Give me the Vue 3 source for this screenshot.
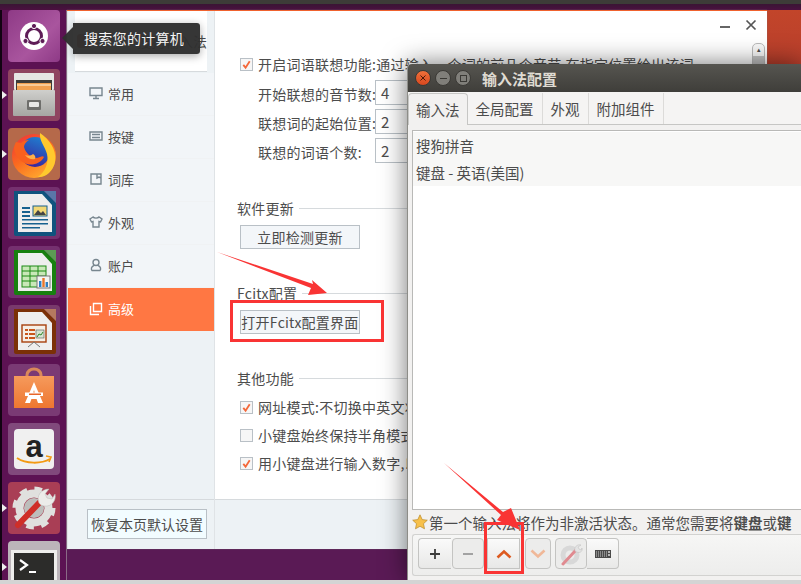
<template>
  <div class="desktop">
    <div class="topbar" />

    <!-- launcher -->
    <aside class="launcher">
      <div v-for="item in launcher" :key="item.name" class="tile" :class="'tile-' + item.name">
        <span v-if="item.running" class="pip" />
        <svg v-if="item.name === 'dash'" viewBox="0 0 52 52" width="52" height="52">
          <circle cx="26" cy="26" r="14" fill="#fff" />
          <circle cx="26" cy="26" r="7.5" fill="none" stroke="#5e1c57" stroke-width="3" />
          <circle cx="26" cy="16" r="2.6" fill="#5e1c57" stroke="#fff" />
          <circle cx="17.5" cy="31" r="2.6" fill="#5e1c57" stroke="#fff" />
          <circle cx="34.5" cy="31" r="2.6" fill="#5e1c57" stroke="#fff" />
        </svg>
        <svg v-else-if="item.name === 'files'" viewBox="0 0 52 52" width="52" height="52">
          <defs>
            <linearGradient id="drawer" x1="0" y1="0" x2="0" y2="1">
              <stop offset="0" stop-color="#cfcfcc" />
              <stop offset="1" stop-color="#a6a6a3" />
            </linearGradient>
          </defs>
          <rect x="6" y="4" width="40" height="17" rx="1" fill="#e6e6e4" />
          <rect x="8" y="11" width="36" height="10" fill="#3d3b38" />
          <rect x="9" y="14" width="34" height="7" fill="#f0a050" />
          <rect x="9" y="15.5" width="34" height="1" fill="#fff3dc" />
          <rect x="5" y="21" width="42" height="26" rx="1" fill="url(#drawer)" />
          <rect x="19" y="31" width="14" height="10" rx="1" fill="#6e6e6b" />
          <rect x="21" y="33" width="10" height="5" rx="1" fill="#e8e8e6" />
        </svg>
        <svg v-else-if="item.name === 'firefox'" viewBox="0 0 52 52" width="52" height="52">
          <defs>
            <linearGradient id="foxbody" x1="0" y1="0" x2=".6" y2="1">
              <stop offset="0" stop-color="#ee2f3c" />
              <stop offset=".55" stop-color="#fb6a1f" />
              <stop offset="1" stop-color="#ffa62e" />
            </linearGradient>
            <linearGradient id="foxglobe" x1=".7" y1="0" x2=".3" y2="1">
              <stop offset="0" stop-color="#1f7fd0" />
              <stop offset="1" stop-color="#3a1f9c" />
            </linearGradient>
          </defs>
          <circle cx="26" cy="28" r="22" fill="url(#foxbody)" />
          <circle cx="27" cy="24" r="15" fill="url(#foxglobe)" />
          <path d="M32 5c9 6 17 16 15 29-2 10-10 16-17 15 7-5 11-14 9-23-2-8-8-13-7-21z" fill="#ffc92e" />
          <path d="M8 14l5 1c2-2 5-3 8-3-3 2-5 4-5 7 1 4 3 6 5 8 2 3 7 4 11 2 2-1 3-1 4 0-3 6-11 9-17 7-7-2-12-9-13-15 0-3 1-5 2-7z" fill="#f8601f" />
          <path d="M17 27c3 1 6 1 8-1 2 1 3 3 2 5-3 1-7 0-10-4z" fill="#ffb04a" />
        </svg>
        <svg v-else-if="item.name === 'writer'" viewBox="0 0 52 52" width="52" height="52">
          <path d="M6 4h30l12 12v31a2 2 0 0 1-2 2H8a2 2 0 0 1-2-2z" fill="#10537e" />
          <path d="M10 7h24l10 11v27H10z" fill="#eeeeee" />
          <path d="M36 4l12 12V4z" fill="#4f95c2" opacity=".7" />
          <path d="M14 20h8v2h-8zM14 24h8v2h-8zM14 28h8v2h-8zM14 32h26v1.6H14zM14 36h26v1.6H14zM14 40h18v1.6H14z" fill="#16618f" />
          <rect x="25" y="19" width="14" height="10" fill="#f2d875" stroke="#16618f" />
          <path d="M26 28l4-5 3 3 2-2 3 4z" fill="#444" />
        </svg>
        <svg v-else-if="item.name === 'calc'" viewBox="0 0 52 52" width="52" height="52">
          <path d="M6 4h30l12 12v31a2 2 0 0 1-2 2H8a2 2 0 0 1-2-2z" fill="#17800f" />
          <path d="M10 7h24l10 11v27H10z" fill="#eeeeee" />
          <path d="M36 4l12 12V4z" fill="#56b84d" opacity=".8" />
          <rect x="14" y="20" width="24" height="21" fill="#c9e8b8" stroke="#1c8a14" />
          <path d="M14 25h24M14 30h24M14 35h24M22 20v21M30 20v21" stroke="#1c8a14" />
          <rect x="29" y="30" width="13" height="12" fill="#f4f4f4" stroke="#777" />
          <path d="M31 35h2.4v6H31z" fill="#2b7fc4" /><path d="M34.3 32h2.4v9h-2.4z" fill="#e8762a" /><path d="M37.6 36H40v5h-2.4z" fill="#2b7fc4" />
        </svg>
        <svg v-else-if="item.name === 'impress'" viewBox="0 0 52 52" width="52" height="52">
          <path d="M6 4h30l12 12v31a2 2 0 0 1-2 2H8a2 2 0 0 1-2-2z" fill="#7b3007" />
          <path d="M10 7h24l10 11v27H10z" fill="#eeeeee" />
          <path d="M36 4l12 12V4z" fill="#c48a5c" opacity=".8" />
          <rect x="14" y="20" width="24" height="17" fill="#f6efe6" stroke="#a8400e" stroke-width="1.4" />
          <path d="M17 24h3v2h-3zM17 28h3v2h-3zM17 32h3v2h-3zM21 24h6v2h-6zM21 28h6v2h-6zM21 32h6v2h-6z" fill="#c8561c" />
          <rect x="28" y="25" width="8" height="8" fill="#d6e4d2" stroke="#555" stroke-width=".6" />
          <path d="M29 32l2-3 2 1 2-3" stroke="#2f8a2a" fill="none" />
          <path d="M26 37l-6 5M26 37l6 5" stroke="#777" />
        </svg>
        <svg v-else-if="item.name === 'store'" viewBox="0 0 52 52" width="52" height="52">
          <defs>
            <linearGradient id="bag" x1="0" y1="0" x2="0" y2="1">
              <stop offset="0" stop-color="#f59a5c" />
              <stop offset="1" stop-color="#ee7630" />
            </linearGradient>
          </defs>
          <path d="M19 16v-5a7 6 0 0 1 14 0v5" fill="none" stroke="#d9885a" stroke-width="3" />
          <path d="M6 12h40v32H6z" fill="url(#bag)" />
          <path d="M26 18l-9 21h5l1.4-4h5.2l1.4 4h5zm0 8l1.2 4h-2.4z" fill="#fff" />
          <rect x="17" y="28.5" width="18" height="3.5" fill="#fff" />
          <rect x="21" y="29.5" width="12" height="1.5" fill="#e8662a" />
        </svg>
        <svg v-else-if="item.name === 'amazon'" viewBox="0 0 52 52" width="52" height="52">
          <rect x="6" y="6" width="40" height="40" rx="4" fill="#f0f0f0" />
          <text x="26" y="34" text-anchor="middle" class="amazon-a">a</text>
          <path d="M9 35c9 6 24 6 33 1" fill="none" stroke="#f39a12" stroke-width="2" />
          <path d="M38 33l5 1-2 5" fill="none" stroke="#f39a12" stroke-width="1.6" />
        </svg>
        <svg v-else-if="item.name === 'settings'" viewBox="0 0 52 52" width="52" height="52">
          <circle cx="26" cy="26" r="10" fill="#bdbdbb" />
          <circle cx="26" cy="26" r="14.5" fill="none" stroke="#e0e0de" stroke-width="8" />
          <circle cx="26" cy="26" r="19" fill="none" stroke="#e0e0de" stroke-width="5" stroke-dasharray="7.5 7.4" />
          <path d="M10 43L33 19" stroke="#cf2f28" stroke-width="6" stroke-linecap="round" />
          <path d="M31 21c-3-7 2-14 10-14l-4 5 2 4 5 1 3-5c2 8-6 15-14 11z" fill="#ececea" stroke="#b8b8b6" stroke-width=".5" />
        </svg>
        <svg v-else-if="item.name === 'terminal'" viewBox="0 0 52 52" width="52" height="52">
          <rect x="3" y="9" width="46" height="43" fill="#eeeeec" />
          <rect x="6" y="12" width="40" height="40" fill="#2c2c2a" />
          <path d="M12 19l7 5-7 5" fill="none" stroke="#fff" stroke-width="2.2" />
          <path d="M21 31h7" stroke="#fff" stroke-width="2" />
        </svg>
      </div>
    </aside>

    <div class="wallpaper-right" />
    <div class="bottom-strip" />

    <!-- sogou settings window -->
    <section class="settings">
      <div class="side">
        <div class="side-head">
          <span class="side-logo" />
          <span class="side-title">搜狗输入法</span>
        </div>
        <nav class="side-menu">
          <a v-for="m in menu" :key="m.label" class="side-item" :class="{ active: m.active }">
            <svg viewBox="0 0 14 14" width="14" height="14" fill="none" stroke="currentColor" stroke-width="1.4">
              <path :d="m.icon" />
            </svg>
            {{ m.label }}
          </a>
        </nav>
        <div class="side-foot">
          <button class="btn reset">恢复本页默认设置</button>
        </div>
      </div>

      <div class="main">
        <div class="win-controls">
          <span class="win-min" />
          <svg viewBox="0 0 12 12" width="12" height="12"><path d="M1.5 1.5l9 9M10.5 1.5l-9 9" stroke="#555" stroke-width="1.7" /></svg>
        </div>
        <div class="scroll-thumb"><span>▴</span></div>

        <label class="check-row first">
          <span class="check on"><svg viewBox="0 0 12 12" width="11" height="11"><path d="M2.5 6.5l2.5 3 4.5-7" fill="none" stroke="#f4683a" stroke-width="2" /></svg></span>
          开启词语联想功能:通过输入一个词的前几个音节,在指定位置给出该词
        </label>
        <div class="field-row"><span class="field-label">开始联想的音节数:</span><span class="field">4</span></div>
        <div class="field-row"><span class="field-label">联想词的起始位置:</span><span class="field">2</span></div>
        <div class="field-row"><span class="field-label">联想的词语个数:</span><span class="field">2</span></div>

        <h4 class="group update"><span>软件更新</span></h4>
        <button class="btn wide">立即检测更新</button>

        <h4 class="group fcitx"><span>Fcitx配置</span></h4>
        <button class="btn wide open-fcitx">打开Fcitx配置界面</button>

        <h4 class="group other"><span>其他功能</span></h4>
        <label v-for="c in others" :key="c.text" class="check-row">
          <span class="check" :class="{ on: c.on }">
            <svg v-if="c.on" viewBox="0 0 12 12" width="11" height="11"><path d="M2.5 6.5l2.5 3 4.5-7" fill="none" stroke="#f4683a" stroke-width="2" /></svg>
          </span>
          {{ c.text }}
        </label>
      </div>
    </section>

    <!-- fcitx config dialog -->
    <section class="dialog">
      <header class="titlebar">
        <span class="dot close"><svg viewBox="0 0 8 8" width="8" height="8"><path d="M1.5 1.5l5 5M6.5 1.5l-5 5" stroke="#4a1a08" stroke-width="1" /></svg></span>
        <span class="dot"><i class="dash-mark" /></span>
        <span class="dot"><i class="box-mark" /></span>
        <span class="title">输入法配置</span>
      </header>
      <div class="tabs">
        <span v-for="(t, i) in tabs" :key="t" class="tab" :class="{ current: i === 0 }">{{ t }}</span>
      </div>
      <div class="list">
        <div class="list-item">搜狗拼音</div>
        <div class="list-item">键盘 - 英语(美国)</div>
      </div>
      <div class="hint">
        <svg viewBox="0 0 16 16" width="16" height="16"><path d="M8 .8l2.2 4.8 5.1.6-3.8 3.5 1 5.1L8 12.3l-4.5 2.5 1-5.1L.7 6.2l5.1-.6z" fill="#f7c04a" stroke="#b98a2a" stroke-width=".7" /></svg>
        <span>第一个输入法将作为非激活状态。通常您需要将<b>键盘</b>或<b>键</b></span>
      </div>
      <div class="toolbar">
        <button class="tool add"><svg viewBox="0 0 12 12" width="12" height="12"><path d="M6 1v10M1 6h10" stroke="#3c3c3c" stroke-width="1.8" /></svg></button>
        <button class="tool off remove"><svg viewBox="0 0 12 12" width="12" height="12"><path d="M1 6h10" stroke="#9a9a9a" stroke-width="1.8" /></svg></button>
        <button class="tool up"><svg viewBox="0 0 16 10" width="16" height="10"><path d="M1.5 8.5L8 2.5l6.5 6" fill="none" stroke="#dd5a20" stroke-width="2.6" /></svg></button>
        <button class="tool off down"><svg viewBox="0 0 16 10" width="16" height="10"><path d="M1.5 1.5L8 7.5l6.5-6" fill="none" stroke="#f0b898" stroke-width="2.6" /></svg></button>
        <button class="tool off config">
          <svg viewBox="0 0 24 24" width="24" height="24">
            <circle cx="11" cy="13" r="7" fill="none" stroke="#d8d8d8" stroke-width="5" />
            <path d="M4 22L17 8" stroke="#e08a90" stroke-width="3" stroke-linecap="round" />
            <path d="M16 9c-1-4 2-7 6-6l-3 2 1 2 2 1 1-2c1 4-3 6-7 3z" fill="#e4e4e4" stroke="#bbb" stroke-width=".5" />
          </svg>
        </button>
        <button class="tool kbd">
          <svg viewBox="0 0 16 8" width="16" height="8"><rect width="16" height="8" fill="#4a4a4a" /><path d="M1 2h11M1 4h11M1 6h11" stroke="#ccc" stroke-dasharray="1 1" /><path d="M13 2h2M13 5h2" stroke="#ddd" stroke-width="1.4" /></svg>
        </button>
      </div>
    </section>

    <!-- tooltip over the launcher -->
    <div class="tooltip">搜索您的计算机</div>

    <!-- red annotations drawn on top of the screenshot -->
    <svg class="marks" viewBox="0 0 801 584" width="801" height="584">
      <rect x="231.5" y="301.5" width="151" height="39" fill="none" stroke="#f93434" stroke-width="3" />
      <rect x="485.5" y="523.5" width="37" height="49" fill="none" stroke="#f93434" stroke-width="3" />
      <path d="M217 252L313 284l-1-4 15 13-19 2 3-7z" fill="#f93434" />
      <path d="M444 463L503 512l8-4 9 22-23-10 4-5z" fill="#f93434" />
    </svg>
  </div>
</template>

<script setup>
const launcher = [
  { name: "dash" },
  { name: "files", running: true },
  { name: "firefox", running: true },
  { name: "writer" },
  { name: "calc" },
  { name: "impress" },
  { name: "store" },
  { name: "amazon" },
  { name: "settings", running: true },
  { name: "terminal", running: true },
];

const menu = [
  { label: "常用", icon: "M1 2h12v7.5H1zM7 9.5V12M4 12.5h6" },
  { label: "按键", icon: "M1 3h12v8H1zM3 5.5h8M3 8.5h8" },
  { label: "词库", icon: "M2 2v10h10V2zM8 2v4l2-1 2 1" },
  { label: "外观", icon: "M4 2L1 4l1.5 3L4 6.5V12h6V6.5l1.5.5L13 4l-3-2c-1 1.5-5 1.5-6 0z" },
  { label: "账户", icon: "M7 1.5a2.5 2.5 0 0 1 0 6 2.5 2.5 0 0 1 0-6zM5 7.5c-3 1-3 4-2 5h8c1-1 1-4-2-5" },
  { label: "高级", icon: "M4.5 1.5h8v8h-8zM1.5 4v8.5H10", active: true },
];

const others = [
  { text: "网址模式:不切换中英文状态", on: true },
  { text: "小键盘始终保持半角模式", on: false },
  { text: "用小键盘进行输入数字,以及其他符号", on: true },
];

const tabs = ["输入法", "全局配置", "外观", "附加组件"];
</script>

<style>
body {
  margin: 0;
  overflow: hidden;
}
</style>

<style scoped>
.desktop {
  position: relative;
  display: flex;
  width: 801px;
  height: 584px;
  overflow: hidden;
  background: #5a1a55;
  font-family: "Noto Sans CJK SC", "Noto Sans", sans-serif;
  font-size: 14px;
  color: #4c4c4c;
}

.topbar {
  position: absolute;
  top: 0;
  left: 0;
  right: 0;
  height: 10px;
  background: linear-gradient(#3d3c38 0 4px, #3a1534 4px, #4b1040);
}

.wallpaper-right {
  position: absolute;
  top: 10px;
  right: 0;
  width: 34px;
  height: 54px;
  background: linear-gradient(#c2452a, #b93f2c);
}

.bottom-strip {
  position: absolute;
  left: 0;
  right: 0;
  bottom: 0;
  height: 4px;
  background: #d4d4d4;
  z-index: 6;
}

/* launcher */
.launcher {
  position: absolute;
  top: 10px;
  left: 0;
  width: 67px;
  height: 571px;
  box-sizing: border-box;
  padding-left: 6px;
  display: flex;
  flex-direction: column;
  gap: 7px;
  overflow: hidden;
  background: #5c1253;
  border-left: 2px solid #120312;
  border-right: 1px solid #8a6a86;
}
.tile {
  position: relative;
  flex: none;
  width: 52px;
  height: 52px;
  border-radius: 4px;
  background: #7d3a78;
}
.tile svg {
  display: block;
}
.pip {
  position: absolute;
  left: -6px;
  top: 22px;
  width: 0;
  height: 0;
  border-left: 5px solid #eee;
  border-top: 4px solid transparent;
  border-bottom: 4px solid transparent;
}
.tile-dash { background: linear-gradient(135deg, #8e3a86, #a9559e 60%, #8e3a86); }
.tile-files { background: #8f4460; }
.tile-firefox { background: #b5694a; }
.tile-writer { background: #75306f; }
.tile-calc { background: #75306f; }
.tile-impress { background: #793a6c; }
.tile-store { background: #7a3a74; }
.tile-amazon { background: #81497c; }
.tile-settings { background: #a93e55; }
.tile-terminal { background: #bcb5ba; border-radius: 4px 4px 0 0; }
.amazon-a {
  font-family: "Liberation Sans", sans-serif;
  font-size: 31px;
  font-weight: 700;
  fill: #222;
}

/* settings window */
.settings {
  position: absolute;
  left: 67px;
  top: 10px;
  width: 700px;
  height: 539px;
  display: flex;
  background: #fff;
  border-top: 1px solid #f0622e;
  box-sizing: border-box;
  box-shadow: 0 0 1px #777;
}
.side {
  width: 148px;
  flex: none;
  display: flex;
  flex-direction: column;
  background: #edf2f5;
  border-right: 1px solid #dfe3e6;
  border-left: 1px solid #e0e4e7;
  box-sizing: border-box;
}
.side-head {
  height: 60px;
  margin: 0 7px;
  border-bottom: 1px solid #d6dadd;
  display: flex;
  align-items: center;
  justify-content: space-between;
  padding-left: 2px;
  background: #fff;
  box-sizing: content-box;
}
.side-logo {
  width: 14px;
  height: 14px;
  border-radius: 3px;
  background: #b5502c;
}
.side-title {
  font-size: 14px;
  white-space: nowrap;
}
.side-menu {
  display: flex;
  flex-direction: column;
  margin-top: 1px;
  background: #f2f5f8;
}
.side-item {
  height: 43px;
  display: flex;
  align-items: center;
  gap: 5px;
  padding: 0 0 2px 21px;
  font-size: 13px;
  color: #4c4c4c;
  border-bottom: 1px solid #f0f2f4;
  box-sizing: border-box;
}
.side-item svg {
  color: #78868f;
}
.side-item.active {
  background: #ff7743;
  color: #fff;
  border-bottom: 0;
}
.side-item.active svg {
  color: #fff;
}
.side-foot {
  margin-top: auto;
  height: 50px;
  border-top: 1px solid #d6dadd;
  padding: 9px 0 0 19px;
  box-sizing: border-box;
}
.btn {
  display: block;
  padding: 0;
  font: inherit;
  font-size: 14px;
  color: #4c4c4c;
  background: #f3f6f9;
  border: 1px solid #b9c0c6;
  box-sizing: border-box;
}
.reset {
  width: 120px;
  height: 30px;
  background: #f2fcff;
  white-space: nowrap;
}
.main {
  position: relative;
  flex: 1;
  padding: 42px 0 0 25px;
  white-space: nowrap;
  overflow: hidden;
}
.main::after {
  content: "";
  position: absolute;
  left: 0;
  right: 0;
  bottom: 0;
  height: 49px;
  background: #edf2f5;
  border-top: 1px solid #d6dadd;
}
.win-controls {
  position: absolute;
  top: 8px;
  right: 10px;
  display: flex;
  align-items: center;
  gap: 15px;
}
.win-min {
  width: 10px;
  height: 2px;
  background: #666;
  margin-top: 3px;
}
.scroll-thumb {
  position: absolute;
  top: 32px;
  right: 2px;
  width: 11px;
  height: 30px;
  border: 1px solid #bbb;
  border-radius: 5px;
  background: linear-gradient(#f8f8f8 0 12px, #c4c4c4 12px);
  font-size: 7px;
  line-height: 10px;
  text-align: center;
}
.check-row {
  display: flex;
  align-items: center;
  gap: 5px;
  height: 28px;
  font-size: 14px;
  letter-spacing: 0.25px;
}
.check-row.first {
  height: 22px;
  margin-bottom: 3px;
}
.check {
  width: 13px;
  height: 13px;
  box-sizing: border-box;
  border: 1px solid #b9c0c6;
  background: #f6f6f6;
  flex: none;
  display: block;
}
.check svg {
  display: block;
}
.field-row {
  display: flex;
  align-items: center;
  height: 29px;
  padding-left: 18px;
  letter-spacing: 0.25px;
}
.field-label {
  width: 117px;
  flex: none;
  white-space: nowrap;
  padding-top: 3px;
}
.field {
  width: 60px;
  height: 25px;
  border: 1px solid #b9c0c6;
  box-sizing: border-box;
  padding-left: 5px;
  line-height: 23px;
  font-size: 15px;
}
.group {
  display: flex;
  align-items: center;
  gap: 5px;
  margin: 0 0 0 -3px;
  height: 20px;
  font-weight: 400;
  font-size: 14px;
  letter-spacing: 0.25px;
  color: #4c4c4c;
}
.group::after {
  content: "";
  flex: 1;
  height: 1px;
  background: #d6dadd;
}
.group.update { margin-top: 33px; }
.group.fcitx { margin-top: 34px; }
.group.other { margin-top: 34px; margin-bottom: 5px; }
.btn.wide {
  width: 120px;
  height: 24px;
  margin-top: 7px;
  letter-spacing: 0.25px;
  white-space: nowrap;
}

/* dialog */
.dialog {
  position: absolute;
  left: 407px;
  top: 64px;
  width: 394px;
  height: 516px;
  display: flex;
  flex-direction: column;
  background: #f2f1f0;
  box-shadow: 0 0 26px rgba(0, 0, 0, 0.55);
  border-left: 1px solid #8d8d88;
  border-radius: 4px 0 0 0;
  box-sizing: border-box;
  z-index: 2;
  font-size: 14.5px;
}
.titlebar {
  flex: none;
  height: 28px;
  display: flex;
  align-items: center;
  gap: 4px;
  padding-left: 7px;
  background: linear-gradient(#565550, #3f3e3a);
  border-radius: 4px 0 0 0;
}
.dot {
  width: 16px;
  height: 16px;
  box-sizing: border-box;
  border-radius: 50%;
  background: #807f7a;
  border: 1px solid #3a3935;
  display: flex;
  align-items: center;
  justify-content: center;
}
.dot.close {
  background: linear-gradient(#f0703a, #d8481f);
}
.dash-mark {
  width: 7px;
  height: 1px;
  background: #3a3935;
}
.box-mark {
  width: 5px;
  height: 5px;
  border: 1px solid #3a3935;
}
.title {
  margin-left: 7px;
  font-size: 15px;
  font-weight: 700;
  color: #dfdbd2;
}
.tabs {
  flex: none;
  height: 32px;
  display: flex;
  align-items: flex-end;
  border-bottom: 1px solid #c6c6c4;
  background: #f5f4f3;
}
.tab {
  height: 31px;
  display: flex;
  align-items: center;
  padding: 0 8px;
  border-right: 1px solid #dcdbd9;
  color: #4c4c4c;
  box-sizing: border-box;
}
.tab.current {
  background: #f2f1f0;
  padding: 0 7px;
  border: 1px solid #c6c6c4;
  border-bottom: 0;
  border-radius: 4px 4px 0 0;
  height: 32px;
  margin-bottom: -1px;
}
.list {
  flex: none;
  height: 380px;
  margin: 5px 0 0 4px;
  padding-top: 1px;
  background: #fff;
  border: 1px solid #b9b9b7;
  border-right: 0;
  box-sizing: border-box;
}
.list-item {
  height: 27px;
  line-height: 27px;
  padding-left: 3px;
  background: #f7f7f6;
}
.hint {
  flex: none;
  height: 24px;
  display: flex;
  align-items: center;
  gap: 1px;
  padding-left: 4px;
  white-space: nowrap;
  overflow: hidden;
}
.hint svg {
  flex: none;
}
.toolbar {
  flex: none;
  height: 42px;
  margin: 0 0 0 4px;
  padding: 3px 0 0 5px;
  border: 1px solid #d2d2d0;
  border-right: 0;
  border-radius: 3px 0 0 3px;
  box-sizing: border-box;
  display: flex;
  background: linear-gradient(#f6f6f5, #ededec);
}
.tool {
  width: 32px;
  height: 31px;
  padding: 0;
  display: flex;
  align-items: center;
  justify-content: center;
  border: 1px solid #c4c4c2;
  border-radius: 4px;
  background: linear-gradient(#fafafa, #e8e8e7);
}
.tool.off {
  background: #ececeb;
}
.tool.add {
  width: 33px;
  margin-right: 1px;
  border-right: 0;
  border-radius: 4px 0 0 4px;
}
.tool.remove {
  margin-right: 3px;
}
.tool.up {
  width: 33px;
  margin-right: 5px;
  border-radius: 0;
}
.tool.down {
  width: 26px;
  margin-right: 4px;
}
.tool.kbd {
  border-left: 0;
  border-radius: 0 4px 4px 0;
}

/* tooltip */
.tooltip {
  position: absolute;
  left: 73px;
  top: 23px;
  width: 127px;
  height: 31px;
  box-sizing: border-box;
  padding-left: 11px;
  line-height: 31px;
  font-size: 14px;
  letter-spacing: 0.3px;
  color: #f4f4f4;
  background: rgba(48, 48, 48, 0.97);
  border-radius: 0 3px 3px 0;
  box-shadow: 0 2px 8px rgba(0, 0, 0, 0.35);
  z-index: 5;
}
.tooltip::before {
  content: "";
  position: absolute;
  left: -11px;
  top: 4px;
  border-right: 11px solid rgba(48, 48, 48, 0.97);
  border-top: 11px solid transparent;
  border-bottom: 11px solid transparent;
}

.marks {
  position: absolute;
  left: 0;
  top: 0;
  z-index: 8;
  pointer-events: none;
}
</style>
